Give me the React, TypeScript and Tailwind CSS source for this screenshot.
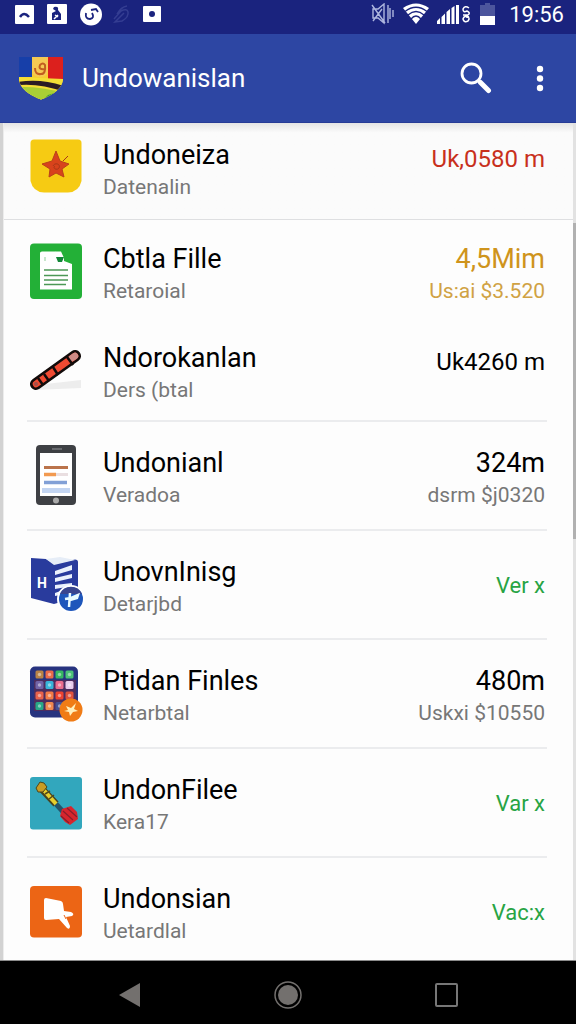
import React from "react";

interface FileItem {
  name: string;
  detail: string;
  value: string;
  subValue?: string;
  tone: "dark" | "red" | "amber" | "green";
  icon: React.ReactNode;
}

const valueColors = {
  dark: "text-black",
  red: "text-[#c8301c]",
  amber: "text-[#cf941c]",
  green: "text-[#28a444]",
};

const subValueColors = {
  dark: "text-[#777777]",
  red: "text-[#c8301c]",
  amber: "text-[#d0a244]",
  green: "text-[#28a444]",
};

const StarIcon = () => (
  <svg viewBox="0 0 52 56" className="w-[52px] h-14 shrink-0" aria-hidden="true">
    <path d="M4 0.500H48Q51.500 0.500 51.500 4V42Q49 53 38 53.500H14Q3 53 0.500 42V4Q0.500 0.500 4 0.500Z" fill="#f6cb13" />
    <path d="M26 12L30 22L39 25L32 30L34 38L26 34L19 38L20 30L12 25L22 22Z" fill="#d8431c" stroke="#b9421a" strokeWidth="1" />
    <path d="M33 22L38 17M23 27C25 23 31 25 29 29C27 32 22 29 25 27" fill="none" stroke="#a73718" strokeWidth="1" />
  </svg>
);

const DocumentIcon = () => (
  <svg viewBox="0 0 52 56" className="w-[52px] h-14 shrink-0" aria-hidden="true">
    <rect y="0.500" width="52" height="55.500" rx="4" fill="#23b037" />
    <path d="M12 8.500H25L34 18L42 21V46.500H10V10Q10 8.500 12 8.500Z" fill="#fff" />
    <path d="M25 8.500H31L34 15V20H28L26 16Z" fill="#fff" />
    <path d="M26 14H34L32 19H28Z" fill="#138738" />
    <path d="M15 14V18" stroke="#b6dfbc" strokeWidth="1.500" />
    <path d="M14 27H38M14 32.500H38M14 37H38M14 41.500H36" stroke="#4c9856" strokeWidth="1.700" />
  </svg>
);

const StickIcon = () => (
  <svg viewBox="0 0 52 56" className="w-[52px] h-14 shrink-0" aria-hidden="true">
    <path d="M7 43L51 38V46L4 48Z" fill="#ededed" />
    <path d="M6 42L45 14" stroke="#120b0a" strokeWidth="12" strokeLinecap="round" />
    <path d="M6 42L45 14" stroke="#ef4a32" strokeWidth="6.500" strokeLinecap="round" />
    <path d="M42 16L45 14" stroke="#cf8b86" strokeWidth="6.500" strokeLinecap="round" />
    <path d="M8 36L13 43M14 32L19 39M23 25L28 33M37 15L43 23" stroke="#120b0a" strokeWidth="2.500" />
    <circle cx="6" cy="42" r="2" fill="#a5514a" />
  </svg>
);

const TabletIcon = () => (
  <svg viewBox="0 0 52 56" className="w-[52px] h-14 shrink-0 overflow-visible" aria-hidden="true">
    <rect x="6" y="-2" width="40" height="60" rx="4" fill="#3e4044" />
    <rect x="10" y="6" width="32" height="43" fill="#fff" />
    <path d="M22 2H32" stroke="#77797d" strokeWidth="1.500" />
    <path d="M14 20.500H38" stroke="#bb744c" strokeWidth="3" />
    <path d="M14 27.500H26" stroke="#f29a50" strokeWidth="3.500" />
    <path d="M26 27.500H38" stroke="#eadfe1" strokeWidth="3" />
    <path d="M14 35.500H37" stroke="#82a0d6" strokeWidth="3.500" />
    <path d="M12 43.500H40" stroke="#c3d5f2" strokeWidth="5" />
    <circle cx="26" cy="53.500" r="3" fill="#aaa" />
  </svg>
);

const BookIcon = () => (
  <svg viewBox="0 0 52 56" className="w-[52px] h-14 shrink-0 overflow-visible" aria-hidden="true">
    <path d="M1 2L16 3L24 8L45 3.500Q48 3.500 48 6V41L24 48L1 42Z" fill="#293b9d" />
    <path d="M16 3L30 1L45 4L24 9Z" fill="#e6edf7" />
    <path d="M25 15L42 9V14L25 19ZM25 22L42 18V22L25 26ZM25 29L42 27V30L25 33ZM25 37L33 34L30 39L25 40Z" fill="#eaf1fc" />
    <text x="7" y="32" fill="#fff" className="text-sm font-bold">
      H
    </text>
    <circle cx="41" cy="43" r="14" fill="#fff" />
    <circle cx="41" cy="43" r="12" fill="#1e56bb" />
    <path d="M30 38A12 12 0 0 1 52 38Z" fill="#39458e" />
    <path d="M40 37L39 51M35 43L41 42L48 39L47 42L40 44" stroke="#e9fbff" strokeWidth="2.500" fill="none" />
  </svg>
);

const appTiles = [
  ["#b88346", "#e96a48", "#36b762", "#4bc277"],
  ["#7264a8", "#37b5d9", "#ec6d8d", "#e8ccec"],
  ["#e8624a", "#f37a45", "#ee4330", "#df513c"],
  ["#27a887", "#f0874d", "#435095", "#ce563b"],
];

const AppGridIcon = () => (
  <svg viewBox="0 0 52 56" className="w-[52px] h-14 shrink-0 overflow-visible" aria-hidden="true">
    <rect y="1.500" width="48" height="51" rx="5" fill="#27337f" />
    <rect x="4" y="15" width="42" height="31" fill="#4c2d5e" />
    {appTiles.map((line, row) =>
      line.map((color, col) => (
        <g key={`${row}-${col}`}>
          <rect x={5.5 + col * 10} y={5.5 + row * 10.5} width="8" height="8" rx="1.500" fill={color} />
          <circle cx={9.5 + col * 10} cy={9.5 + row * 10.5} r="1.700" fill="#fff" fillOpacity="0.450" />
        </g>
      ))
    )}
    <circle cx="41" cy="45" r="11.500" fill="#f07c16" />
    <path d="M36 41L41 43L46 38L44 44L48 46L43 47L40 51L39 47L34 46L38 45Z" fill="#fff0bd" />
  </svg>
);

const DartIcon = () => (
  <svg viewBox="0 0 52 56" className="w-[52px] h-14 shrink-0" aria-hidden="true">
    <rect y="3" width="52" height="52.500" rx="3" fill="#32a7bd" />
    <path d="M10 13L26 30" stroke="#49431e" strokeWidth="7" />
    <path d="M11 13L27 31" stroke="#e7cf2d" strokeWidth="4" />
    <path d="M6 14L10 8L14 9L17 13L13 18L8 18Z" fill="#c99c24" stroke="#4b461c" strokeWidth="1" />
    <path d="M15 20L20 17M19 25L24 21" stroke="#51491e" strokeWidth="1.500" />
    <path d="M26 30L36 41" stroke="#23546b" strokeWidth="5" />
    <path d="M32 35L41 32L47 38L48 45L40 51L35 48L30 42Z" fill="#d7252d" />
    <path d="M33 37L43 46M37 34L47 43M31 42L39 49" stroke="#881e2b" strokeWidth="1.200" />
  </svg>
);

const PointerIcon = () => (
  <svg viewBox="0 0 52 56" className="w-[52px] h-14 shrink-0" aria-hidden="true">
    <rect y="3" width="52" height="51.500" rx="4" fill="#ec6515" />
    <path d="M16 15Q14 15 14 17V35Q14 37 16 37L29 36L37 45Q40 47 40 43L36 34L42 33Q45 31 41 29L34 28L33 21Q33 19 31 18Z" fill="#fff" />
    <path d="M34 32L36 36" stroke="#ec6515" strokeWidth="1" />
  </svg>
);

const ShieldLogo = () => (
  <svg viewBox="0 0 46 44" className="w-[46px] h-11 shrink-0" aria-hidden="true">
    <clipPath id="shield">
      <path d="M1 1H45V24Q43 36 23 43.500Q3 36 1 24Z" />
    </clipPath>
    <g clipPath="url(#shield)">
      <rect width="46" height="44" fill="#f7cc31" />
      <rect width="14" height="21" fill="#173fa9" />
      <rect x="30" width="16" height="23" fill="#dc201d" />
      <path d="M14 0V15Q15 21 22 21Q30 21 30 14V0Z" fill="#f5c953" />
      <path d="M0 21L46 23V44H0Z" fill="#f3df36" />
      <path d="M0 26Q22 22 46 30V36Q23 27 0 29Z" fill="#2b1c24" />
      <path d="M0 31Q22 30 46 37V44H0Z" fill="#a8cf35" />
      <path d="M30 39L46 34V44H25Z" fill="#3c9c3b" />
    </g>
    <path d="M17 12Q17 19 23 18Q28 18 27 9Q25 6 22 9Q20 14 27 13" fill="none" stroke="#c25d20" strokeWidth="2" />
  </svg>
);

const items: FileItem[] = [
  { name: "Undoneiza", detail: "Datenalin", value: "Uk,0580 m", tone: "red", icon: <StarIcon /> },
  { name: "Cbtla Fille", detail: "Retaroial", value: "4,5Mim", subValue: "Us:ai $3.520", tone: "amber", icon: <DocumentIcon /> },
  { name: "Ndorokanlan", detail: "Ders (btal", value: "Uk4260 m", tone: "dark", icon: <StickIcon /> },
  { name: "Undonianl", detail: "Veradoa", value: "324m", subValue: "dsrm $j0320", tone: "dark", icon: <TabletIcon /> },
  { name: "UnovnInisg", detail: "Detarjbd", value: "Ver x", tone: "green", icon: <BookIcon /> },
  { name: "Ptidan Finles", detail: "Netarbtal", value: "480m", subValue: "Uskxi $10550", tone: "dark", icon: <AppGridIcon /> },
  { name: "UndonFilee", detail: "Kera17", value: "Var x", tone: "green", icon: <DartIcon /> },
  { name: "Undonsian", detail: "Uetardlal", value: "Vac:x", tone: "green", icon: <PointerIcon /> },
];

const StatusBar = () => (
  <div className="flex h-[34px] items-center justify-between bg-[#1a237e] pb-1 pl-[15px] pr-3 text-white">
    <svg viewBox="0 0 148 24" className="w-[148px] h-6" aria-hidden="true">
      <rect y="2" width="19" height="19" rx="1" fill="#fff" />
      <path d="M5 14Q9 8 14 14" fill="none" stroke="#1a237e" strokeWidth="2.500" />
      <rect x="32" y="1" width="20" height="20" rx="1" fill="#fff" />
      <path d="M39 4Q44 3 43 7L46 11V17H37V10L41 8L38 6Z" fill="#1a237e" />
      <path d="M40 12L43 14M39 16L43 12" stroke="#fff" strokeWidth="1.500" />
      <circle cx="76" cy="11.500" r="11" fill="#fff" />
      <path d="M71 10Q70 16 75 16Q80 15 77 10M76 7L81 6L83 9" fill="none" stroke="#1a237e" strokeWidth="1.800" />
      <path d="M99 16L106 8Q112 5 113 9Q114 14 107 18L100 19L109 10M102 11Q106 4 112 3" fill="none" stroke="#343d92" strokeWidth="1.500" />
      <rect x="128" y="3" width="18" height="16" rx="1" fill="#fff" />
      <circle cx="137" cy="11" r="3" fill="#1a237e" />
    </svg>
    <div className="flex items-center gap-[14px]">
      <svg viewBox="0 0 124 24" className="w-[124px] h-6" aria-hidden="true">
        <path d="M1 2L14 20M2 6H7L13 1V20L7 15H2ZM2 18L11 6M17 2V20M19 5V16M22 7V14" fill="none" stroke="#aeb6df" strokeWidth="1.400" />
        <path d="M32 5Q45 -4 58 5L45 21Z" fill="#fff" />
        <path d="M34 8.500Q45 0 56 8.500M37 12Q45 5 53 12M40 16Q45 10 50 16" fill="none" stroke="#1a237e" strokeWidth="1.300" />
        <path d="M66 21V18L69 15V21ZM70.500 21V14L74 10.500V21ZM75.500 21V9L79 6V21ZM80.500 21V5L83.500 3V21ZM85 21V2H88V21Z" fill="#fff" />
        <path d="M98 5Q94 2 92 6Q92 10 96 8Q100 10 97 12H92M98 14Q93 12 92 16Q93 20 97 18Q100 14 95 14" fill="none" stroke="#fff" strokeWidth="1.500" />
        <path d="M114 0H119V2H124V14H109V2H114Z" fill="#4c559d" />
        <rect x="109" y="13" width="15" height="9" fill="#fff" />
      </svg>
      <span className="text-[22px] leading-6">19:56</span>
    </div>
  </div>
);

const Header = () => (
  <header className="flex h-[89px] items-center border-b border-[#263b96] bg-[#2d46a3] pl-[18px] pr-6 text-white">
    <ShieldLogo />
    <h1 className="ml-[18px] flex-1 text-[26px] leading-8">Undowanislan</h1>
    <button type="button" aria-label="Search" className="p-2">
      <svg viewBox="0 0 32 32" className="size-8" fill="none" stroke="currentColor" aria-hidden="true">
        <circle cx="11.500" cy="11.500" r="9.500" strokeWidth="2.800" />
        <path d="M18 18L21 21" strokeWidth="3" />
        <path d="M20.500 20.500L28.500 28.500" strokeWidth="5" strokeLinecap="round" />
      </svg>
    </button>
    <button type="button" aria-label="More options" className="ml-7 py-2">
      <svg viewBox="0 0 24 32" className="h-8 w-6" fill="currentColor" aria-hidden="true">
        <circle cx="12" cy="7" r="3.200" />
        <circle cx="12" cy="16.500" r="3.200" />
        <circle cx="12" cy="26" r="3.200" />
      </svg>
    </button>
  </header>
);

const ItemRow: React.FC<{ item: FileItem }> = ({ item }) => (
  <div className="flex items-start">
    {item.icon}
    <div className="ml-[21px] min-w-0 flex-1">
      <h2 className="text-[27px] leading-8 text-black">{item.name}</h2>
      <p className="text-[21px] leading-8 text-[#777777]">{item.detail}</p>
    </div>
    <div className={`mr-[2px] text-right ${valueColors[item.tone]}`}>
      {item.tone === "green" ? (
        <p className="pt-[14px] text-[22px] leading-8">{item.value}</p>
      ) : item.subValue ? (
        <>
          <p className="text-[27px] leading-8">{item.value}</p>
          <p className={`text-[21px] leading-8 ${subValueColors[item.tone]}`}>{item.subValue}</p>
        </>
      ) : (
        <p className="pt-1 text-2xl leading-8">{item.value}</p>
      )}
    </div>
  </div>
);

const App: React.FC = () => {
  const [pinned, first, ...rest] = items;

  return (
    <div className="flex min-h-screen flex-col bg-white font-[Roboto,sans-serif]">
      <StatusBar />
      <Header />
      <main className="flex flex-1 border-b border-[#8b8b8b] bg-[#fdfdfd]">
        <div className="w-1 border-r border-[#ececec] bg-[#d2d2d2]" />
        <div className="flex-1">
          <section className="border-b border-[#dedfe1] bg-linear-to-b from-[#e4e4e4] to-[#fbfbfb] to-10% py-4 pl-[26px] pr-[26px]">
            <ItemRow item={pinned} />
          </section>
          <ul className="pl-[23px] pr-[26px]">
            <li className="pb-[13px] pl-[3px] pt-[23px]">
              <ItemRow item={first} />
            </li>
            {rest.map((item, index) => (
              <li
                key={item.name}
                className={
                  index === 0
                    ? "border-b-2 border-[#ebecee] pb-[14px] pl-[3px] pt-[22px]"
                    : "border-b-2 border-[#ebecee] pb-[18px] pl-[3px] pt-[25px] last:border-0 last:pb-3"
                }
              >
                <ItemRow item={item} />
              </li>
            ))}
          </ul>
        </div>
        <div className="w-[3px] bg-[#e2e2e2]">
          <div className="mt-[100px] h-[316px] bg-[#b1b1b1]" />
        </div>
      </main>
      <nav className="flex h-[63px] items-center justify-between bg-black pl-[113px] pr-[113px] pt-1">
        <button type="button" aria-label="Back">
          <svg viewBox="0 0 32 32" className="size-8" aria-hidden="true">
            <path d="M6 16L27 4V28Z" fill="#73706e" />
          </svg>
        </button>
        <button type="button" aria-label="Home">
          <svg viewBox="0 0 32 32" className="size-8" aria-hidden="true">
            <circle cx="16" cy="16" r="13" fill="none" stroke="#73706e" strokeWidth="1.500" />
            <circle cx="16" cy="16" r="10" fill="#73706e" />
          </svg>
        </button>
        <button type="button" aria-label="Recent apps">
          <svg viewBox="0 0 32 32" className="size-8" aria-hidden="true">
            <rect x="5" y="5" width="21" height="22" rx="1" fill="none" stroke="#777" strokeWidth="2" />
          </svg>
        </button>
      </nav>
    </div>
  );
};

export default App;
